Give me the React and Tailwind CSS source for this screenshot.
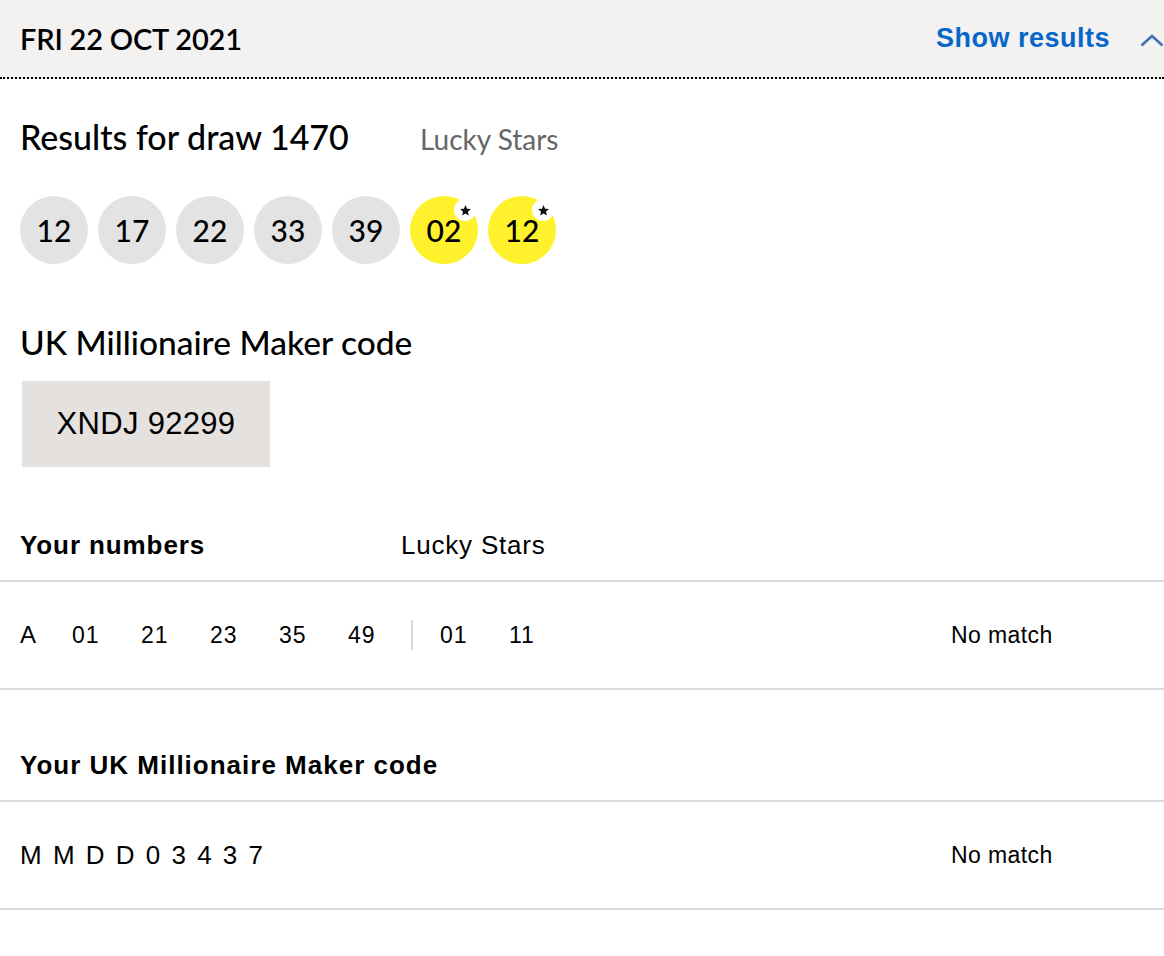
import React from 'react';

const heading = { fontFamily: '"Lato", "Noto Sans", sans-serif' };
const body = { fontFamily: '"Liberation Sans", Arial, sans-serif' };

const Ball = ({ n, star }) => (
  <div
    className={`relative w-[68px] h-[68px] rounded-full flex items-center justify-center text-[30px] font-medium text-black ${
      star ? 'bg-[#fff12b]' : 'bg-[#e3e3e3]'
    }`}
    style={heading}
  >
    {n}
    {star && (
      <span className="absolute left-[44px] top-[3px] w-[22px] h-[22px] rounded-full bg-white flex items-center justify-center">
        <svg width="13" height="13" viewBox="0 0 24 24">
          <path d="M12 2l2.9 6.6 7.1.7-5.4 4.8 1.6 7-6.2-3.7-6.2 3.7 1.6-7L2 9.3l7.1-.7z" fill="#111" />
        </svg>
      </span>
    )}
  </div>
);

export default function App() {
  const main = ['12', '17', '22', '33', '39'];
  const stars = ['02', '12'];
  const picks = ['01', '21', '23', '35'];
  const pickStars = ['01', '11'];
  const code = ['M', 'M', 'D', 'D', '0', '3', '4', '3', '7'];

  return (
    <div className="w-[1164px] min-h-[956px] bg-white text-black">
      {/* Header bar */}
      <div className="h-[79px] bg-[#f3f2f1] border-b-2 border-dotted border-black flex items-center pl-5">
        <h2 className="text-[29px] leading-[36px] font-semibold tracking-[-0.2px]" style={heading}>
          FRI 22 OCT 2021
        </h2>
        <div className="ml-auto flex items-center">
          <span className="text-[27px] font-bold tracking-[0.5px] text-[#0766c9]" style={body}>
            Show results
          </span>
          <svg className="ml-[30px] mt-[4px]" width="24" height="13" viewBox="0 0 24 13">
            <path d="M1.5 11.5L12 2l10.5 9.5" fill="none" stroke="#4270b3" strokeWidth="2.6" />
          </svg>
        </div>
      </div>

      {/* Draw results */}
      <div className="px-5 pt-[38px]">
        <div className="flex items-baseline">
          <h3 className="text-[34px] leading-[40px] font-medium w-[400px]" style={heading}>
            Results for draw 1470
          </h3>
          <span className="text-[28px] leading-[40px] text-[#666666]" style={heading}>
            Lucky Stars
          </span>
        </div>
        <div className="flex gap-[10px] mt-[37px]">
          {main.map((n, i) => (
            <Ball key={'m' + i} n={n} />
          ))}
          {stars.map((n, i) => (
            <Ball key={'s' + i} n={n} star />
          ))}
        </div>

        <h3 className="text-[33.5px] leading-[40px] font-medium mt-[58px]" style={heading}>
          UK Millionaire Maker code
        </h3>
        <div
          className="ml-[2px] mt-[19px] w-[248px] h-[86px] bg-[#e4e1df] flex items-center justify-center text-[31px] tracking-[0.3px]"
          style={body}
        >
          XNDJ 92299
        </div>
      </div>

      {/* Your numbers */}
      <div style={body}>
        <div className="flex items-center h-[32px] px-5 mt-[62px] mb-[19px]">
          <span className="text-[26px] font-bold tracking-[0.9px] w-[381px]">Your numbers</span>
          <span className="text-[26px] tracking-[0.8px]">Lucky Stars</span>
        </div>
        <div className="border-t-2 border-b-2 border-[#d9d9d9] h-[110px] flex items-center pl-5 text-[23px] tracking-[1px]">
          <span className="w-[52px] text-[24px] tracking-[0.6px]">A</span>
          {picks.map((n, i) => (
            <span key={i} className="w-[69px]">
              {n}
            </span>
          ))}
          <span className="w-[63px]">49</span>
          <span className="w-[2px] h-[30px] bg-[#d9d9d9] mr-[27px]" />
          {pickStars.map((n, i) => (
            <span key={i} className="w-[69px]">
              {n}
            </span>
          ))}
          <span className="ml-auto w-[213px] tracking-[0.4px]">No match</span>
        </div>

        <div className="flex items-center h-[32px] px-5 mt-[59px] mb-[19px]">
          <span className="text-[26px] font-bold tracking-[1px]">Your UK Millionaire Maker code</span>
        </div>
        <div className="border-t-2 border-b-2 border-[#d9d9d9] h-[110px] flex items-center pl-5">
          <span className="text-[26px] tracking-[2px] whitespace-pre">{code.join(' ')}</span>
          <span className="ml-auto w-[213px] text-[23px] tracking-[0.4px]">No match</span>
        </div>
      </div>
    </div>
  );
}
